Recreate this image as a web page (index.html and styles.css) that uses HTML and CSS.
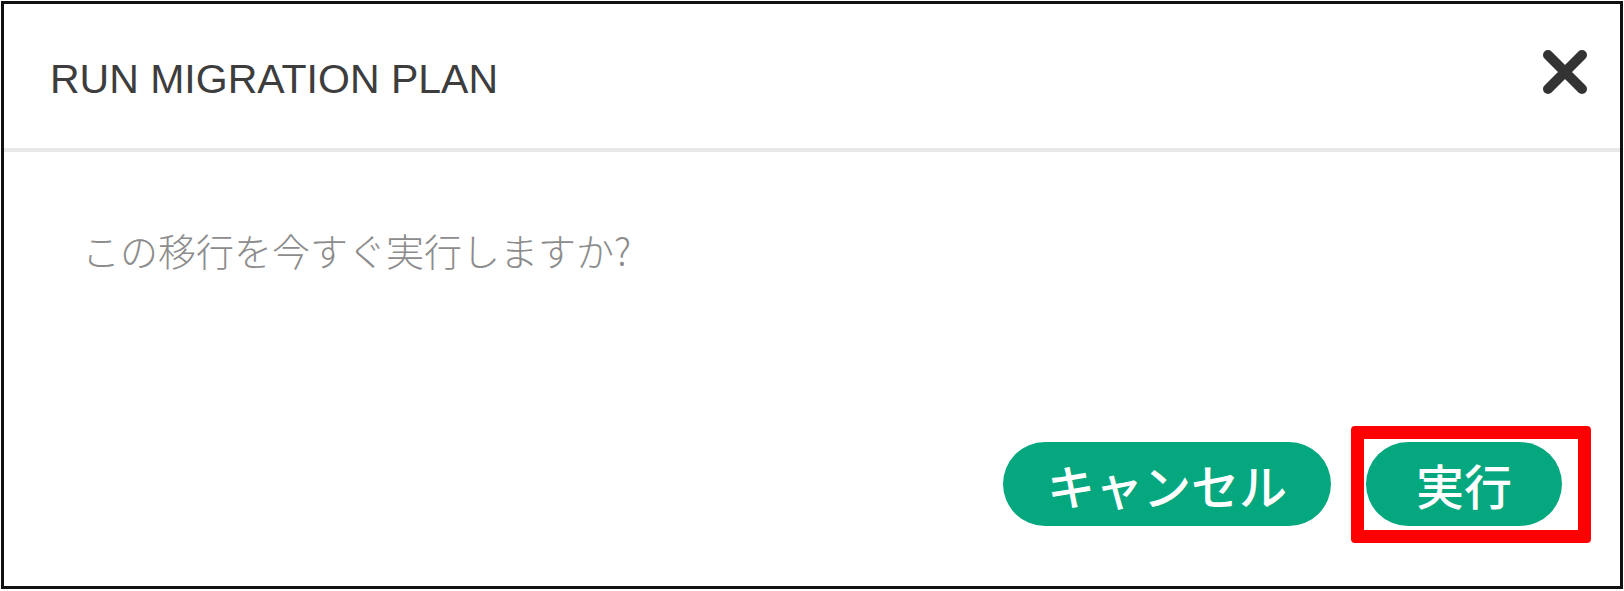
FILE: index.html
```html
<!DOCTYPE html>
<html lang="ja">
<head>
    <meta charset="UTF-8">
    <meta name="viewport" content="width=device-width, initial-scale=1.0">
    <title>Run Migration Plan</title>
    <link rel="stylesheet" href="styles.css">
</head>
<body>
    <div class="dialog">
        <div class="dialog-header">
            <h1 class="dialog-title">RUN MIGRATION PLAN</h1>
            <button class="close-btn" aria-label="close">
                <svg width="46" height="44" viewBox="0 0 46 44">
                    <path d="M6 5 L40 39 M40 5 L6 39" stroke="#333" stroke-width="10" stroke-linecap="round" fill="none"/>
                </svg>
            </button>
        </div>

        <div class="dialog-body">
            <p class="message">この移行を今すぐ実行しますか?</p>
        </div>

        <div class="dialog-footer">
            <button class="pill-btn">キャンセル</button>
            <span class="highlight">
                <button class="pill-btn">実行</button>
            </span>
        </div>
    </div>
</body>
</html>
```

FILE: styles.css
```css
body { margin: 0; background: #fff; }
.dialog {
    margin: 1px;
    width: 1622px;
    height: 588px;
    box-sizing: border-box;
    border: 3px solid #111;
    display: flex;
    flex-direction: column;
    background: #fff;
}
.dialog-header {
    height: 144px;
    border-bottom: 4px solid #e8e8e8;
    display: flex;
    align-items: center;
    justify-content: space-between;
    padding: 0 32px 0 46px;
}
.dialog-title {
    margin: 6px 0 0 0;
    font-family: "Liberation Sans", Arial, sans-serif;
    font-weight: normal;
    font-size: 41px;
    color: #3d3d3d;
}
.close-btn {
    background: none;
    border: none;
    padding: 0;
    margin-top: -8px;
    cursor: pointer;
    display: flex;
}
.dialog-body {
    flex: 1;
    padding: 79px 0 0 78px;
}
.message {
    margin: 0;
    font-family: "Noto Sans CJK JP", sans-serif;
    font-weight: 300;
    font-size: 38px;
    line-height: 38px;
    color: #8c8c8c;
}
.dialog-footer {
    display: flex;
    justify-content: flex-end;
    align-items: center;
    gap: 35px;
    padding: 0 58px 60px 0;
}
.pill-btn {
    height: 84px;
    padding: 0 44px;
    border: none;
    border-radius: 42px;
    background: #05a77f;
    color: #fff;
    font-family: "Noto Sans CJK JP", sans-serif;
    font-weight: 500;
    font-size: 48px;
    line-height: 84px;
    cursor: pointer;
}
.highlight {
    position: relative;
    display: flex;
}
.highlight .pill-btn { padding: 0 50px; }
.highlight::after {
    content: "";
    position: absolute;
    left: -15px;
    top: -16px;
    right: -29px;
    bottom: -17px;
    border: 13px solid #ff0000;
    border-radius: 4px;
    pointer-events: none;
}
```
